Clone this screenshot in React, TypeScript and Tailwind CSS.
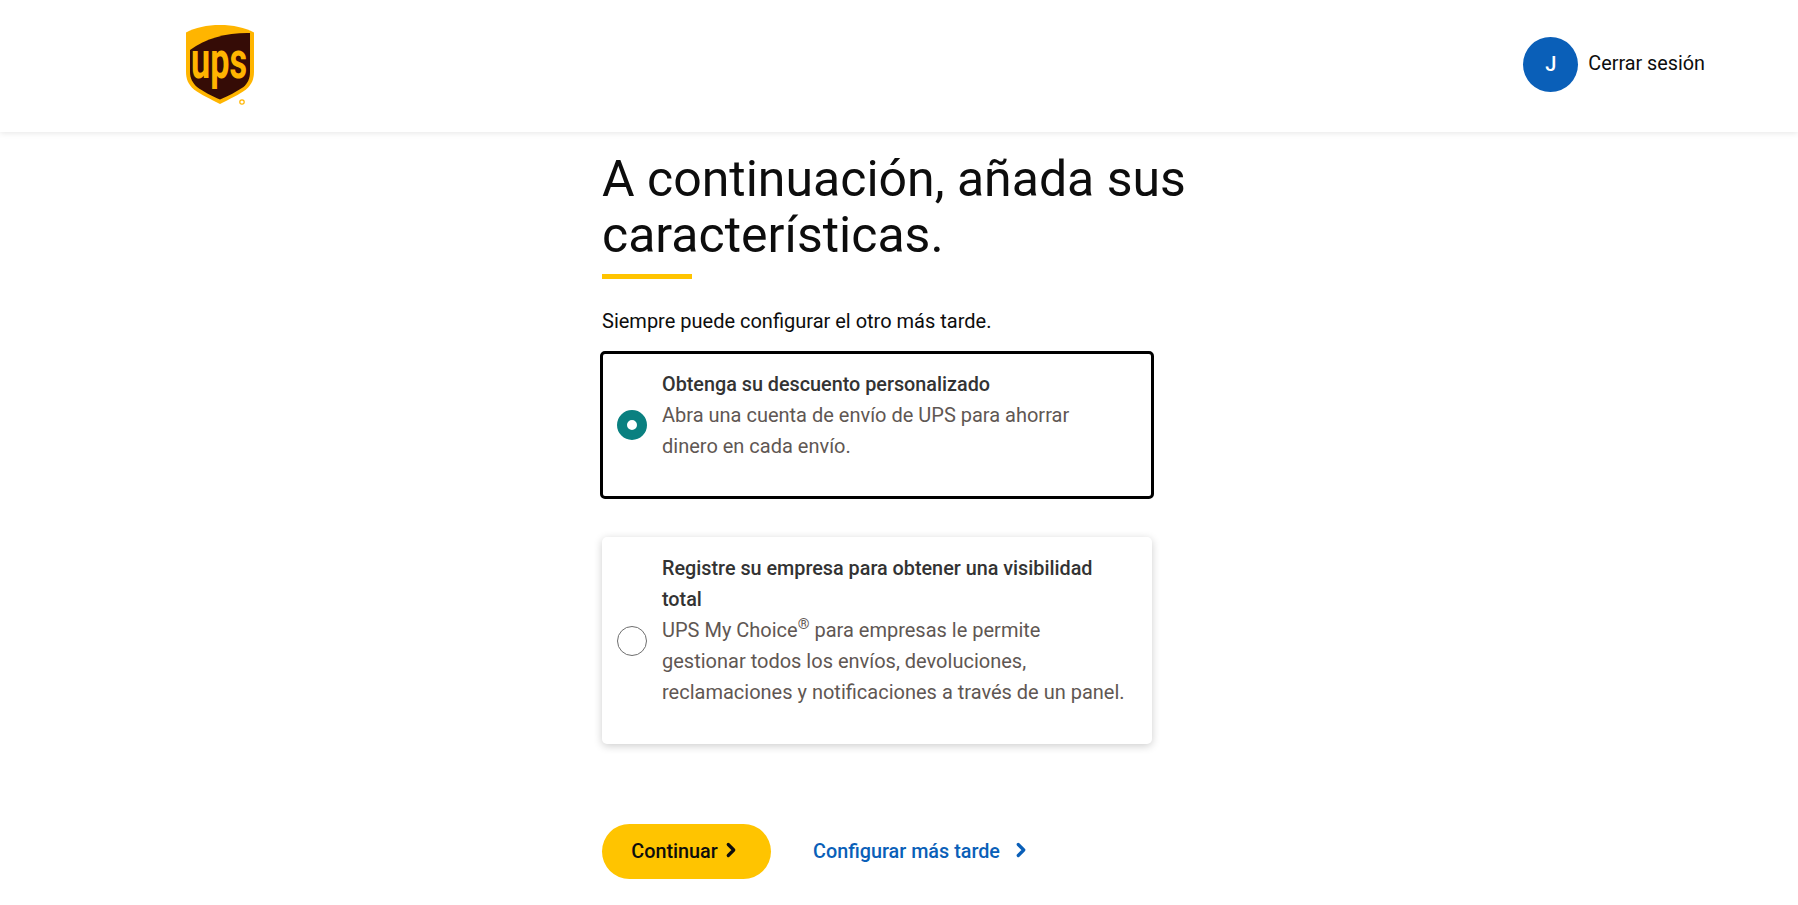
import { ChevronRight } from "lucide-react";

function UpsLogo() {
  return (
    <svg width="68" height="82" viewBox="0 0 68 82" className="block overflow-visible">
      <path d="M34 0C21 0 9 2.500 0 7.500V47c0 7 2.500 13 8 17.500C14 69 25 74.500 34 79c9-4.500 20-10 26-14.500 5.500-4.500 8-10.500 8-17.500V7.500C59 2.500 47 0 34 0Z" fill="#ffb500" />
      <path d="M64 8V47c0 6-2 11-6.500 15C51 66.500 42 71 34 74.500 26 71 17 66.500 11 62 6.500 58 4 53 4 47V25C20 13 42 7.500 64 8Z" fill="#350c06" />
      <text x="33" y="53" textAnchor="middle" fill="#ffb500" fontFamily="Roboto, sans-serif" fontWeight="700" fontSize="52" textLength="56" lengthAdjust="spacingAndGlyphs">ups</text>
      <circle cx="56" cy="77" r="2.200" fill="none" stroke="#ffb500" strokeWidth="1.200" />
    </svg>
  );
}

function OptionCard({
  selected,
  title,
  children,
}: {
  selected?: boolean;
  title: string;
  children: React.ReactNode;
}) {
  return (
    <div
      className={
        selected
          ? "flex items-center w-[554px] h-[148px] -mx-0.5 pl-3.5 rounded-[5px] border-[3px] border-black bg-white"
          : "flex items-center w-[550px] h-[207px] pl-[15px] rounded-[5px] bg-white shadow-[0_2px_8px_rgba(0,0,0,0.2)]"
      }
    >
      {selected ? (
        <span className="shrink-0 w-[30px] h-[30px] rounded-full border-[10px] border-[#0a8080] bg-white" />
      ) : (
        <span className="shrink-0 w-[30px] h-[30px] rounded-full border border-[#6e6e6e] bg-white" />
      )}
      <div className={selected ? "ml-[15px] w-[465px] -mt-[20px] text-xl leading-[31px]" : "ml-[15px] w-[465px] -mt-[21px] text-xl leading-[31px]"}>
        <div className="font-medium text-[19.8px] text-[#333333]">{title}</div>
        <div className="text-[#5f5753]">{children}</div>
      </div>
    </div>
  );
}

export default function App() {
  return (
    <div className="min-h-[905px] bg-white text-[#0d0d0d] font-['Roboto',sans-serif] overflow-hidden">
      <header className="h-[132px] flex items-center justify-between pl-[186px] pr-[93px] bg-white shadow-[0_1px_6px_rgba(0,0,0,0.1)]">
        <UpsLogo />
        <div className="flex items-center gap-2.5 -mt-1">
          <div className="w-[55px] h-[55px] rounded-full bg-[#0a5fb8] flex items-center justify-center text-white font-medium text-xl">
            J
          </div>
          <span className="text-[19.8px] -mt-px">Cerrar sesión</span>
        </div>
      </header>

      <main className="w-[550px] ml-[602px]">
        <h1 className="w-[600px] pt-[19px] text-[50px] leading-[56px] font-normal">
          A continuación, añada sus características.
        </h1>
        <div className="w-[90px] h-[5px] mt-[11px] bg-[#ffc400]" />
        <p className="mt-[29px] text-xl leading-[27px]">Siempre puede configurar el otro más tarde.</p>

        <div className="mt-4 flex flex-col gap-[38px]">
          <OptionCard selected title="Obtenga su descuento personalizado">
            Abra una cuenta de envío de UPS para ahorrar dinero en cada envío.
          </OptionCard>
          <OptionCard title="Registre su empresa para obtener una visibilidad total">
            UPS My Choice
            <sup className="text-[15px] leading-none">®</sup> para empresas le permite gestionar todos los envíos,
            devoluciones, reclamaciones y notificaciones a través de un panel.
          </OptionCard>
        </div>

        <div className="mt-[80px] flex items-center gap-[42px]">
          <button className="w-[169px] h-[55px] rounded-full bg-[#ffc400] flex items-center justify-center gap-0.5 text-[19.8px] font-medium text-[#0d0d0d]">
            <span>Continuar</span>
            <ChevronRight size={22} strokeWidth={3.5} className="-mt-1" />
          </button>
          <a className="flex items-center gap-2.5 text-[19.8px] font-medium text-[#0a5fb8]">
            <span>Configurar más tarde</span>
            <ChevronRight size={22} strokeWidth={3.5} className="-mt-1" />
          </a>
        </div>
      </main>
    </div>
  );
}
